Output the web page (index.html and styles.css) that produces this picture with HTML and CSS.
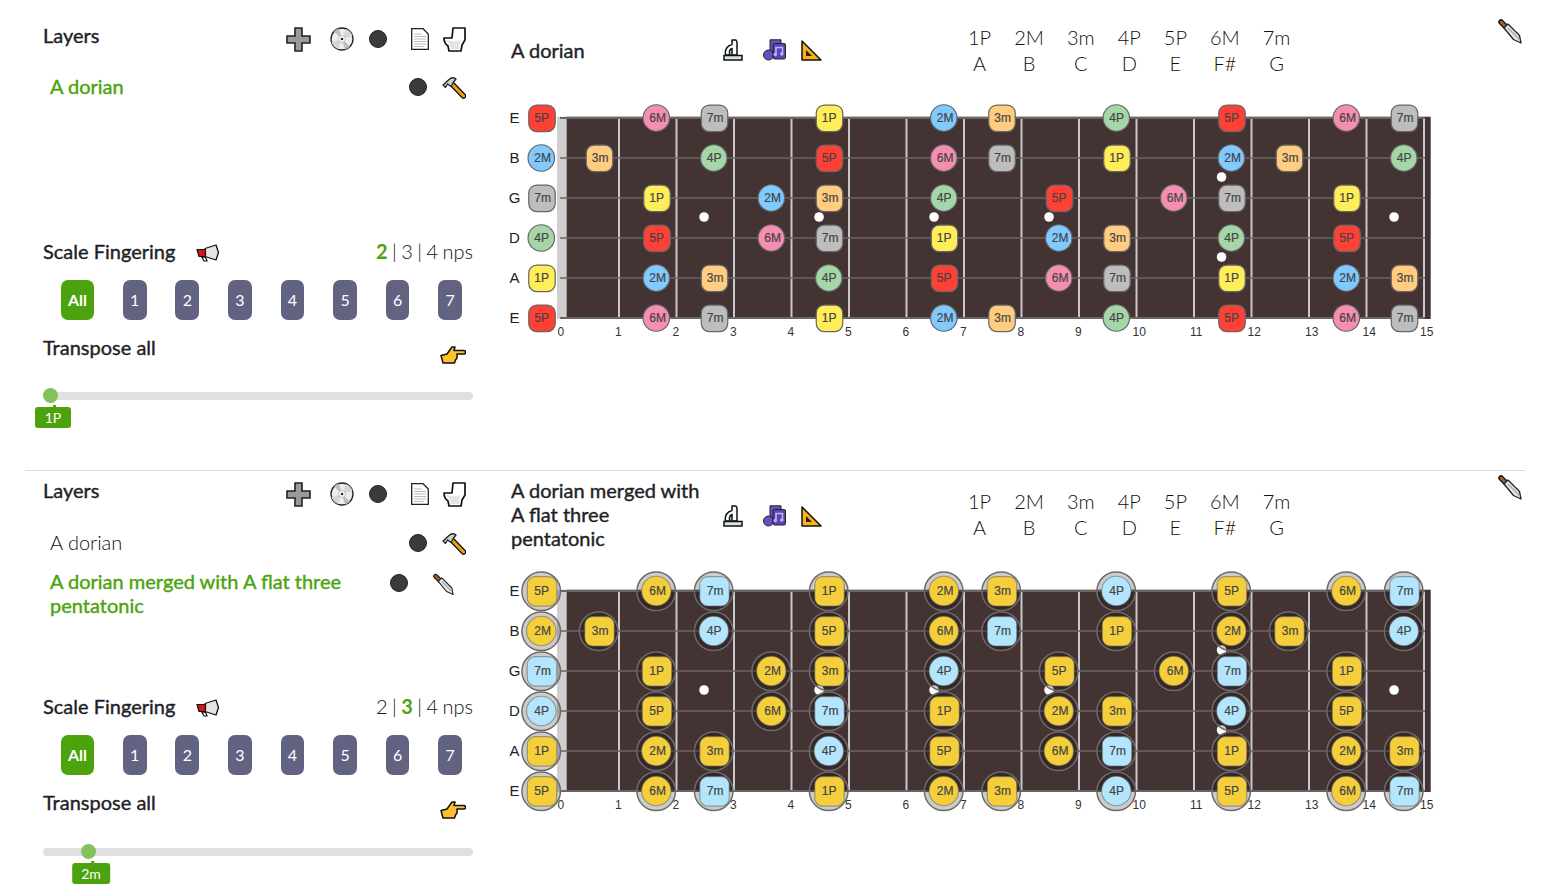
FILE: index.html
```html
<!DOCTYPE html>
<html lang="en">
<head>
<meta charset="utf-8">
<title>Scales</title>
<link rel="stylesheet" href="styles.css">
</head>
<body>
<svg class="defs" aria-hidden="true">
  <symbol id="i-plus" viewBox="0 0 25 25"><path d="M9 1h7v8h8v7h-8v8H9v-8H1V9h8z" fill="#9a9a9a" stroke="#222" stroke-width="1.6"/></symbol>
  <symbol id="i-disc" viewBox="0 0 24 24"><circle cx="12" cy="12" r="11" fill="#ededed" stroke="#222" stroke-width="1.3"/><path d="M12 12L4 4.500A11 11 0 0 1 9 1.600zM12 12L20 19.500A11 11 0 0 1 15 22.400z" fill="#bdbdbd"/><path d="M12 12L22.500 9A11 11 0 0 0 16 2zM12 12L1.500 15A11 11 0 0 0 8 22z" fill="#d6d6d6"/><circle cx="12" cy="12" r="3.400" fill="#fff" stroke="#aaa" stroke-width=".7"/><circle cx="12" cy="12" r="1.300" fill="#222"/></symbol>
  <symbol id="i-doc" viewBox="0 0 18 22"><path d="M.7.7H12L17.300 6V21.300H.7z" fill="#fff" stroke="#222" stroke-width="1.3"/><path d="M3 6h8M3 8.500h12M3 11h12M3 13.500h12M3 16h12M3 18.500h10" stroke="#bbb" stroke-width="1.1"/></symbol>
  <symbol id="i-toilet" viewBox="0 0 23 25"><path d="M10 1h12v12l-3 5-1 6H6l-1-5C2 17 1 14 1 11h8z" fill="#fff" stroke="#111" stroke-width="1.700" stroke-linejoin="round"/><path d="M3 13c5 1.500 11 1.500 15 0l-1.500 4-.5 5H8l-1-4z" fill="#e4e4e4"/></symbol>
  <symbol id="i-hammer" viewBox="0 0 24 22"><path d="M10 7L21.500 19" stroke="#111" stroke-width="5.500" stroke-linecap="round"/><path d="M10 7L21.500 19" stroke="#f2a010" stroke-width="3" stroke-linecap="round"/><path d="M1 8L7 2.500C9 .5 12 .5 14 2L11.500 5 9 9.500 5.500 7 3.500 10.500z" fill="#cfcfcf" stroke="#222" stroke-width="1.300" stroke-linejoin="round"/></symbol>
  <symbol id="i-knife" viewBox="0 0 24 25"><path d="M3 3L8 8" stroke="#111" stroke-width="5.500" stroke-linecap="round"/><path d="M3 3L8 8" stroke="#a5602c" stroke-width="3" stroke-linecap="round"/><path d="M6 9L10 5 21.500 16.500 23 24 15.500 20.500z" fill="#e8e8e8" stroke="#222" stroke-width="1.300" stroke-linejoin="round"/><path d="M10 9L21 20" stroke="#aaa" stroke-width="1.500"/></symbol>
  <symbol id="i-horn" viewBox="0 0 24 18"><path d="M6 13.500l2 3.500h3l-1.500-4z" fill="#fff" stroke="#111" stroke-width="1.200"/><path d="M9 4.500L20 1l2.500 7.500L20 16 9 12.500z" fill="#e4e4e4" stroke="#111" stroke-width="1.300" stroke-linejoin="round"/><path d="M1 5.500h8.500v7H3z" fill="#d8101c" stroke="#111" stroke-width="1.200" stroke-linejoin="round"/></symbol>
  <symbol id="i-hand" viewBox="0 0 26 19"><path d="M1 10.500L7 9l5-7h3l-1 3.500h10c2 0 2 3.500 0 3.500h-7v4l-1.500 2-1 3H3z" fill="#fcc02e" stroke="#111" stroke-width="1.500" stroke-linejoin="round"/></symbol>
  <symbol id="i-scope" viewBox="0 0 20 22"><path d="M9 1h4l1 2v13H9V9.500C6.500 10.500 6 13 7 16H2.500C1.500 11 4 6.500 9 5.500z" fill="#fff" stroke="#111" stroke-width="1.500" stroke-linejoin="round"/><rect x="1" y="16.500" width="18" height="4.500" fill="#d5e6e6" stroke="#111" stroke-width="1.500"/></symbol>
  <symbol id="i-music" viewBox="0 0 23 22"><path d="M7 16V.8h11v5H10.500V16z" fill="#6a4fc3" stroke="#222"/><circle cx="5.500" cy="16" r="5" fill="#6a4fc3" stroke="#222"/><rect x="10" y="4.500" width="12.500" height="15.500" rx="1.500" fill="#5a45b5" stroke="#222"/><path d="M13 15.500V8.500h6.500v6.500" fill="none" stroke="#c3b6f8" stroke-width="1.500"/><circle cx="12.300" cy="15.500" r="1.700" fill="#c3b6f8"/><circle cx="18.800" cy="15" r="1.700" fill="#c3b6f8"/></symbol>
  <symbol id="i-square" viewBox="0 0 21 21"><path d="M1 1L20 20H1z" fill="#fbb117" stroke="#111" stroke-width="1.500" stroke-linejoin="round"/><path d="M5 10l6 6H5z" fill="#222"/></symbol>
</svg>

<section class="panel panel-first">
  <aside class="side">
    <header class="bar head">
      <h3 class="heading">Layers</h3>
      <div class="tools">
        <svg class="ic ic-plus"><use href="#i-plus"/></svg>
        <svg class="ic ic-disc"><use href="#i-disc"/></svg>
        <span class="dot dot-tool"></span>
        <svg class="ic ic-doc"><use href="#i-doc"/></svg>
        <svg class="ic ic-toilet"><use href="#i-toilet"/></svg>
      </div>
    </header>
    <ul class="layers">
      <li class="layer">
        <span class="name active">A dorian</span>
        <span class="dot"></span>
        <svg class="ic ic-hammer"><use href="#i-hammer"/></svg>
      </li>
    </ul>
    <div class="bar">
      <div class="with-icon"><h3 class="heading">Scale Fingering</h3><svg class="ic ic-horn"><use href="#i-horn"/></svg></div>
      <p class="nps"><b>2</b> | 3 | 4 nps</p>
    </div>
    <div class="fingers">
      <button class="finger all">All</button><button class="finger">1</button><button class="finger">2</button><button class="finger">3</button><button class="finger">4</button><button class="finger">5</button><button class="finger">6</button><button class="finger">7</button>
    </div>
    <div class="bar transpose">
      <h3 class="heading">Transpose all</h3>
      <svg class="ic ic-hand"><use href="#i-hand"/></svg>
    </div>
    <div class="slider">
      <div class="thumb" style="left:0px"><span class="value">1P</span></div>
    </div>
  </aside>
  <main class="main">
    <svg class="ic ic-knife chop"><use href="#i-knife"/></svg>
    <header class="scale-head">
      <h3 class="title">A dorian</h3>
      <div class="scale-tools">
        <svg class="ic ic-scope"><use href="#i-scope"/></svg>
        <svg class="ic ic-music"><use href="#i-music"/></svg>
        <svg class="ic ic-square"><use href="#i-square"/></svg>
      </div>
      <div class="intervals">
        <span>1P</span><span>2M</span><span>3m</span><span>4P</span><span>5P</span><span>6M</span><span>7m</span>
        <span>A</span><span>B</span><span>C</span><span>D</span><span>E</span><span>F#</span><span>G</span>
      </div>
    </header>
    <svg class="board" data-theme="degrees" viewBox="505 94 940 248"></svg>
  </main>
</section>

<section class="panel panel-second">
  <aside class="side">
    <header class="bar head">
      <h3 class="heading">Layers</h3>
      <div class="tools">
        <svg class="ic ic-plus"><use href="#i-plus"/></svg>
        <svg class="ic ic-disc"><use href="#i-disc"/></svg>
        <span class="dot dot-tool"></span>
        <svg class="ic ic-doc"><use href="#i-doc"/></svg>
        <svg class="ic ic-toilet"><use href="#i-toilet"/></svg>
      </div>
    </header>
    <ul class="layers">
      <li class="layer">
        <span class="name">A dorian</span>
        <span class="dot"></span>
        <svg class="ic ic-hammer"><use href="#i-hammer"/></svg>
      </li>
      <li class="layer layer-long">
        <span class="name active">A dorian merged with A flat three pentatonic</span>
        <span class="dot"></span>
        <svg class="ic ic-knife"><use href="#i-knife"/></svg>
      </li>
    </ul>
    <div class="bar">
      <div class="with-icon"><h3 class="heading">Scale Fingering</h3><svg class="ic ic-horn"><use href="#i-horn"/></svg></div>
      <p class="nps">2 | <b>3</b> | 4 nps</p>
    </div>
    <div class="fingers">
      <button class="finger all">All</button><button class="finger">1</button><button class="finger">2</button><button class="finger">3</button><button class="finger">4</button><button class="finger">5</button><button class="finger">6</button><button class="finger">7</button>
    </div>
    <div class="bar transpose">
      <h3 class="heading">Transpose all</h3>
      <svg class="ic ic-hand"><use href="#i-hand"/></svg>
    </div>
    <div class="slider">
      <div class="thumb" style="left:38px"><span class="value">2m</span></div>
    </div>
  </aside>
  <main class="main">
    <svg class="ic ic-knife chop"><use href="#i-knife"/></svg>
    <header class="scale-head">
      <h3 class="title">A dorian merged with A flat three pentatonic</h3>
      <div class="scale-tools">
        <svg class="ic ic-scope"><use href="#i-scope"/></svg>
        <svg class="ic ic-music"><use href="#i-music"/></svg>
        <svg class="ic ic-square"><use href="#i-square"/></svg>
      </div>
      <div class="intervals">
        <span>1P</span><span>2M</span><span>3m</span><span>4P</span><span>5P</span><span>6M</span><span>7m</span>
        <span>A</span><span>B</span><span>C</span><span>D</span><span>E</span><span>F#</span><span>G</span>
      </div>
    </header>
    <svg class="board" data-theme="merged" viewBox="505 94 940 248"></svg>
  </main>
</section>
<script src="board.js"></script>
</body>
</html>
```

FILE: styles.css
```css
* { box-sizing: border-box; }
html { overflow: hidden; }
body { margin: 0; font-family: Lato, "Liberation Sans", sans-serif; color: #111; background: #fff; }
.defs { position: absolute; width: 0; height: 0; }
h3, p, ul { margin: 0; padding: 0; }

.panel { display: flex; margin: 0 19px 0 25px; }
.panel-first { height: 471px; border-bottom: 1px solid #ddd; }
.panel-second { height: 413px; }
.panel-first .side { padding-top: 22px; }
.panel-second .side { padding-top: 6px; }
.panel-first .layers { padding-top: 24px; }
.panel-second .slider { margin-top: 33px; }
.panel-first .main { padding-top: 24px; }
.panel-second .main { padding-top: 7px; }
.panel-first .board { margin-top: 18px; }
.panel-second .board { margin-top: 17px; }
.panel-first .chop { top: 19px; }
.panel-second .chop { top: 4px; }
.panel-second .scale-tools { margin-top: 4px; }

.side { width: 480px; flex: none; padding-left: 18px; padding-right: 32px; }
.main { position: relative; flex: 1; }

.heading, .title { font-size: 20px; font-weight: 400; -webkit-text-stroke: .4px currentColor; color: #1f1f28; }
.heading { line-height: 22px; padding-bottom: 2px; }
.title { line-height: 24px; }
.ic { display: block; flex: none; overflow: visible; }
.dot { display: block; flex: none; width: 18px; height: 18px; border-radius: 50%; background: #3b3b3b; border: 1px solid #222; }

.bar { display: flex; justify-content: space-between; align-items: center; height: 24px; }
.head { height: 28px; }
.tools { display: flex; align-items: center; margin: 6px 7px 0 0; }
.ic-plus { width: 25px; height: 25px; }
.ic-disc { width: 24px; height: 24px; margin-left: 19px; }
.dot-tool { margin-left: 15px; }
.ic-doc { width: 18px; height: 22px; margin-left: 24px; }
.ic-toilet { width: 23px; height: 25px; margin-left: 14px; }

.layers { list-style: none; height: 190px; padding: 25px 7px 0 7px; display: flex; flex-direction: column; gap: 15px; }
.layer { display: flex; align-items: flex-start; }
.layer .dot { margin-top: 4px; }
.name { flex: 1; font-size: 20px; line-height: 24px; font-weight: 300; }
.name.active { color: #4ca30d; font-weight: 400; -webkit-text-stroke: .4px currentColor; }
.ic-hammer { width: 24px; height: 22px; margin: 3px 0 0 15px; }
.layer-long { padding-right: 10px; }
.layer-long .name { flex: none; width: 340px; margin-top: -1px; }
.layer-long .ic-knife { width: 21px; height: 23px; margin: 3px 0 0 25px; }

.with-icon { display: flex; align-items: center; gap: 21px; }
.ic-horn { width: 24px; height: 18px; margin-top: 2px; }
.nps { font-size: 20px; line-height: 22px; padding-bottom: 2px; font-weight: 300; word-spacing: -1px; }
.nps b { color: #4ca30d; font-weight: 700; }

.fingers { display: flex; gap: 28.900px; padding: 16px 0 0 18px; }
.finger { width: 23.700px; height: 40px; padding: 0 0 2px; border: 0; border-radius: 7px; background: #626282; color: #fff; font: 400 16px Lato, sans-serif; }
.finger.all { width: 33px; background: #4ca30d; font-weight: 700; }

.transpose { margin-top: 16px; }
.ic-hand { width: 26px; height: 19px; margin: 12px 7px 0 0; }

.slider { position: relative; height: 8px; margin-top: 32px; border-radius: 4px; background: #e0e0e0; }
.thumb { position: absolute; top: -4px; width: 15px; height: 15px; border-radius: 50%; background: #85c05a; }
.value { position: absolute; top: 19px; left: 10px; transform: translateX(-50%); min-width: 36px; height: 21px; padding: 0 9px; border-radius: 3px; background: #4ca30d; color: #fff; font-size: 14px; line-height: 21px; text-align: center; white-space: nowrap; }
.value::before { content: ""; position: absolute; top: -2px; left: 50%; width: 3px; height: 2px; background: #4ca30d; }

.scale-head { display: flex; align-items: center; }
.title { flex: none; width: 218px; padding: 0 20px 0 6px; }
.scale-tools { display: flex; align-items: center; }
.ic-scope { width: 20px; height: 22px; }
.ic-music { width: 23px; height: 22px; margin-left: 20px; }
.ic-square { width: 21px; height: 21px; margin-left: 15px; }
.intervals { display: grid; grid-template-columns: repeat(7, auto); column-gap: 23px; justify-items: center; margin-left: 146px; font-size: 20px; line-height: 26px; font-weight: 300; }

.chop { position: absolute; right: 3px; width: 24px; height: 25px; }
.board { display: block; width: 940px; height: 248px; font-family: "Liberation Sans", Arial, sans-serif; }
.wood { fill: #433333; }
.nut { fill: #cfcfcf; }
.fret { stroke: #c9c9c9; stroke-width: 2; }
.string { stroke: #6b6565; stroke-width: 1.5; }
.string.edge { stroke-width: 2; }
.inlay { fill: #fff; }
.ring { fill: rgba(0, 0, 0, .2); stroke: #6e6a6a; stroke-width: 1.5; }
.note-shape { stroke: #666; stroke-width: 1.2; }
.board[data-theme="merged"] .note-shape { stroke: rgba(90, 90, 90, .5); }
.note-label { font-size: 12px; fill: #444; stroke: #444; stroke-width: .2; }
.open-label { font-size: 15px; text-anchor: middle; fill: #222; }
.fret-label { font-size: 12px; fill: #333; }
```

FILE: board.js
```js
// Draws both fretboards from one table of strings: fret -> interval.
var STRINGS = [
  { name: 'E', notes: { 0: '5P', 2: '6M', 3: '7m', 5: '1P', 7: '2M', 8: '3m', 10: '4P', 12: '5P', 14: '6M', 15: '7m' } },
  { name: 'B', notes: { 0: '2M', 1: '3m', 3: '4P', 5: '5P', 7: '6M', 8: '7m', 10: '1P', 12: '2M', 13: '3m', 15: '4P' } },
  { name: 'G', notes: { 0: '7m', 2: '1P', 4: '2M', 5: '3m', 7: '4P', 9: '5P', 11: '6M', 12: '7m', 14: '1P' } },
  { name: 'D', notes: { 0: '4P', 2: '5P', 4: '6M', 5: '7m', 7: '1P', 9: '2M', 10: '3m', 12: '4P', 14: '5P' } },
  { name: 'A', notes: { 0: '1P', 2: '2M', 3: '3m', 5: '4P', 7: '5P', 9: '6M', 10: '7m', 12: '1P', 14: '2M', 15: '3m' } },
  { name: 'E', notes: { 0: '5P', 2: '6M', 3: '7m', 5: '1P', 7: '2M', 8: '3m', 10: '4P', 12: '5P', 14: '6M', 15: '7m' } }
];
var SQUARE = { '1P': 1, '3m': 1, '5P': 1, '7m': 1 };
var DEGREE = { '1P': '#ffee58', '2M': '#81caff', '3m': '#ffcc80', '4P': '#a5d6a7', '5P': '#ff4035', '6M': '#f48fb1', '7m': '#bdbdbd' };
var INLAYS = [[2.5, 217], [4.5, 217], [6.5, 217], [8.5, 217], [11.5, 177], [11.5, 257], [14.5, 217]];

function fretX(n) { return 561.5 + 57.5 * n; }
function stringY(i) { return 118 + 40 * i; }

function noteSvg(fret, y, label, merged) {
  var size = merged ? 29.5 : 26.5;
  var fill = merged ? (label === '4P' || label === '7m' ? '#b3e5fc' : '#f5cf3b') : DEGREE[label];
  var square = SQUARE[label];
  var cx = (square ? 542 : 541.3) + 57.5 * fret;
  var out = '';
  if (merged) out += '<circle class="ring" cx="' + (541.2 + 57.5 * fret) + '" cy="' + (y + .3) + '" r="19.3"/>';
  if (square) {
    out += '<rect class="note-shape" x="' + (cx - size / 2) + '" y="' + (y - size / 2 + .3) + '" width="' + size + '" height="' + size + '" rx="8" fill="' + fill + '"/>';
  } else {
    out += '<circle class="note-shape" cx="' + cx + '" cy="' + y + '" r="' + size / 2 + '" fill="' + fill + '"/>';
  }
  return out + '<text class="note-label" x="' + (534.3 + 57.5 * fret) + '" y="' + (y + 4.3) + '">' + label + '</text>';
}

document.querySelectorAll('.board').forEach(function (board) {
  var merged = board.dataset.theme === 'merged';
  var s = '<rect class="nut" x="557" y="116.700" width="10" height="202.300"/>';
  s += '<rect class="wood" x="566.700" y="116.700" width="864" height="202.300"/>';
  var f, i;
  for (f = 1; f <= 15; f++) s += '<line class="fret" x1="' + fretX(f) + '" x2="' + fretX(f) + '" y1="117" y2="319"/>';
  for (i = 0; i < 6; i++) {
    s += '<line class="string' + (i === 0 || i === 5 ? ' edge' : '') + '" x1="560" x2="1425" y1="' + stringY(i) + '" y2="' + stringY(i) + '"/>';
  }
  INLAYS.forEach(function (d) { s += '<circle class="inlay" cx="' + (560.3 + 57.5 * d[0]) + '" cy="' + d[1] + '" r="4.800"/>'; });
  for (f = 0; f <= 15; f++) s += '<text class="fret-label" x="' + (557.5 + 57.5 * f) + '" y="336">' + f + '</text>';
  STRINGS.forEach(function (str, idx) {
    var y = stringY(idx);
    Object.keys(str.notes).forEach(function (k) { s += noteSvg(+k, y, str.notes[k], merged); });
    s += '<text class="open-label" x="514.500" y="' + (y + 4.800) + '">' + str.name + '</text>';
  });
  board.innerHTML = s;
});
```
